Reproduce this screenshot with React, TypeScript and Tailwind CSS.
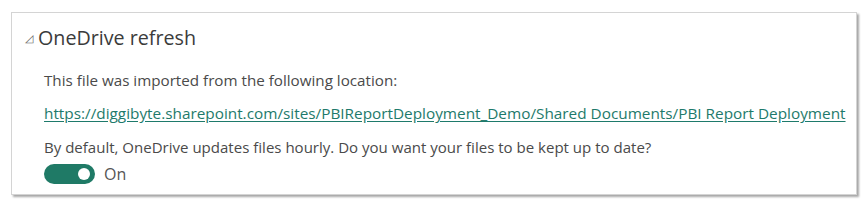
export default function App() {
    return (
        <div className="h-[202px] w-[868px] bg-white pl-[11px] pt-[12px] font-['Segoe_UI','Open_Sans',sans-serif]">
            <div className="h-[183px] w-[846px] border border-[#d4d4d4] bg-white shadow-[2px_2px_2px_rgba(0,0,0,0.35)]">
                <div className="flex items-center gap-[5px] pl-[13px] pt-[10px] text-[19.7px] text-[#3b3b3b]">
                    <span className="text-[11px] text-[#666]">◿</span>
                    <span>OneDrive refresh</span>
                </div>
                <div className="flex flex-col pl-[32px] pt-[17px] text-[15.2px] text-[#4a4a4a]">
                    <p className="leading-[20px]">This file was imported from the following location:</p>
                    <a className="mt-[13px] text-[15.33px] leading-[20px] text-[#1e7a6b] underline underline-offset-2">
                        https://diggibyte.sharepoint.com/sites/PBIReportDeployment_Demo/Shared Documents/PBI Report Deployment
                    </a>
                    <p className="mt-[14px] text-[15.04px] leading-[20px]">
                        By default, OneDrive updates files hourly. Do you want your files to be kept up to date?
                    </p>
                    <div className="mt-[5px] flex items-center gap-[9px]">
                        <div className="flex h-[20px] w-[51px] items-center justify-end rounded-full bg-[#1f7a66] pr-[5px]">
                            <div className="h-[12px] w-[12px] rounded-full bg-white" />
                        </div>
                        <span className="text-[16px] text-[#555]">On</span>
                    </div>
                </div>
            </div>
        </div>
    )
}
